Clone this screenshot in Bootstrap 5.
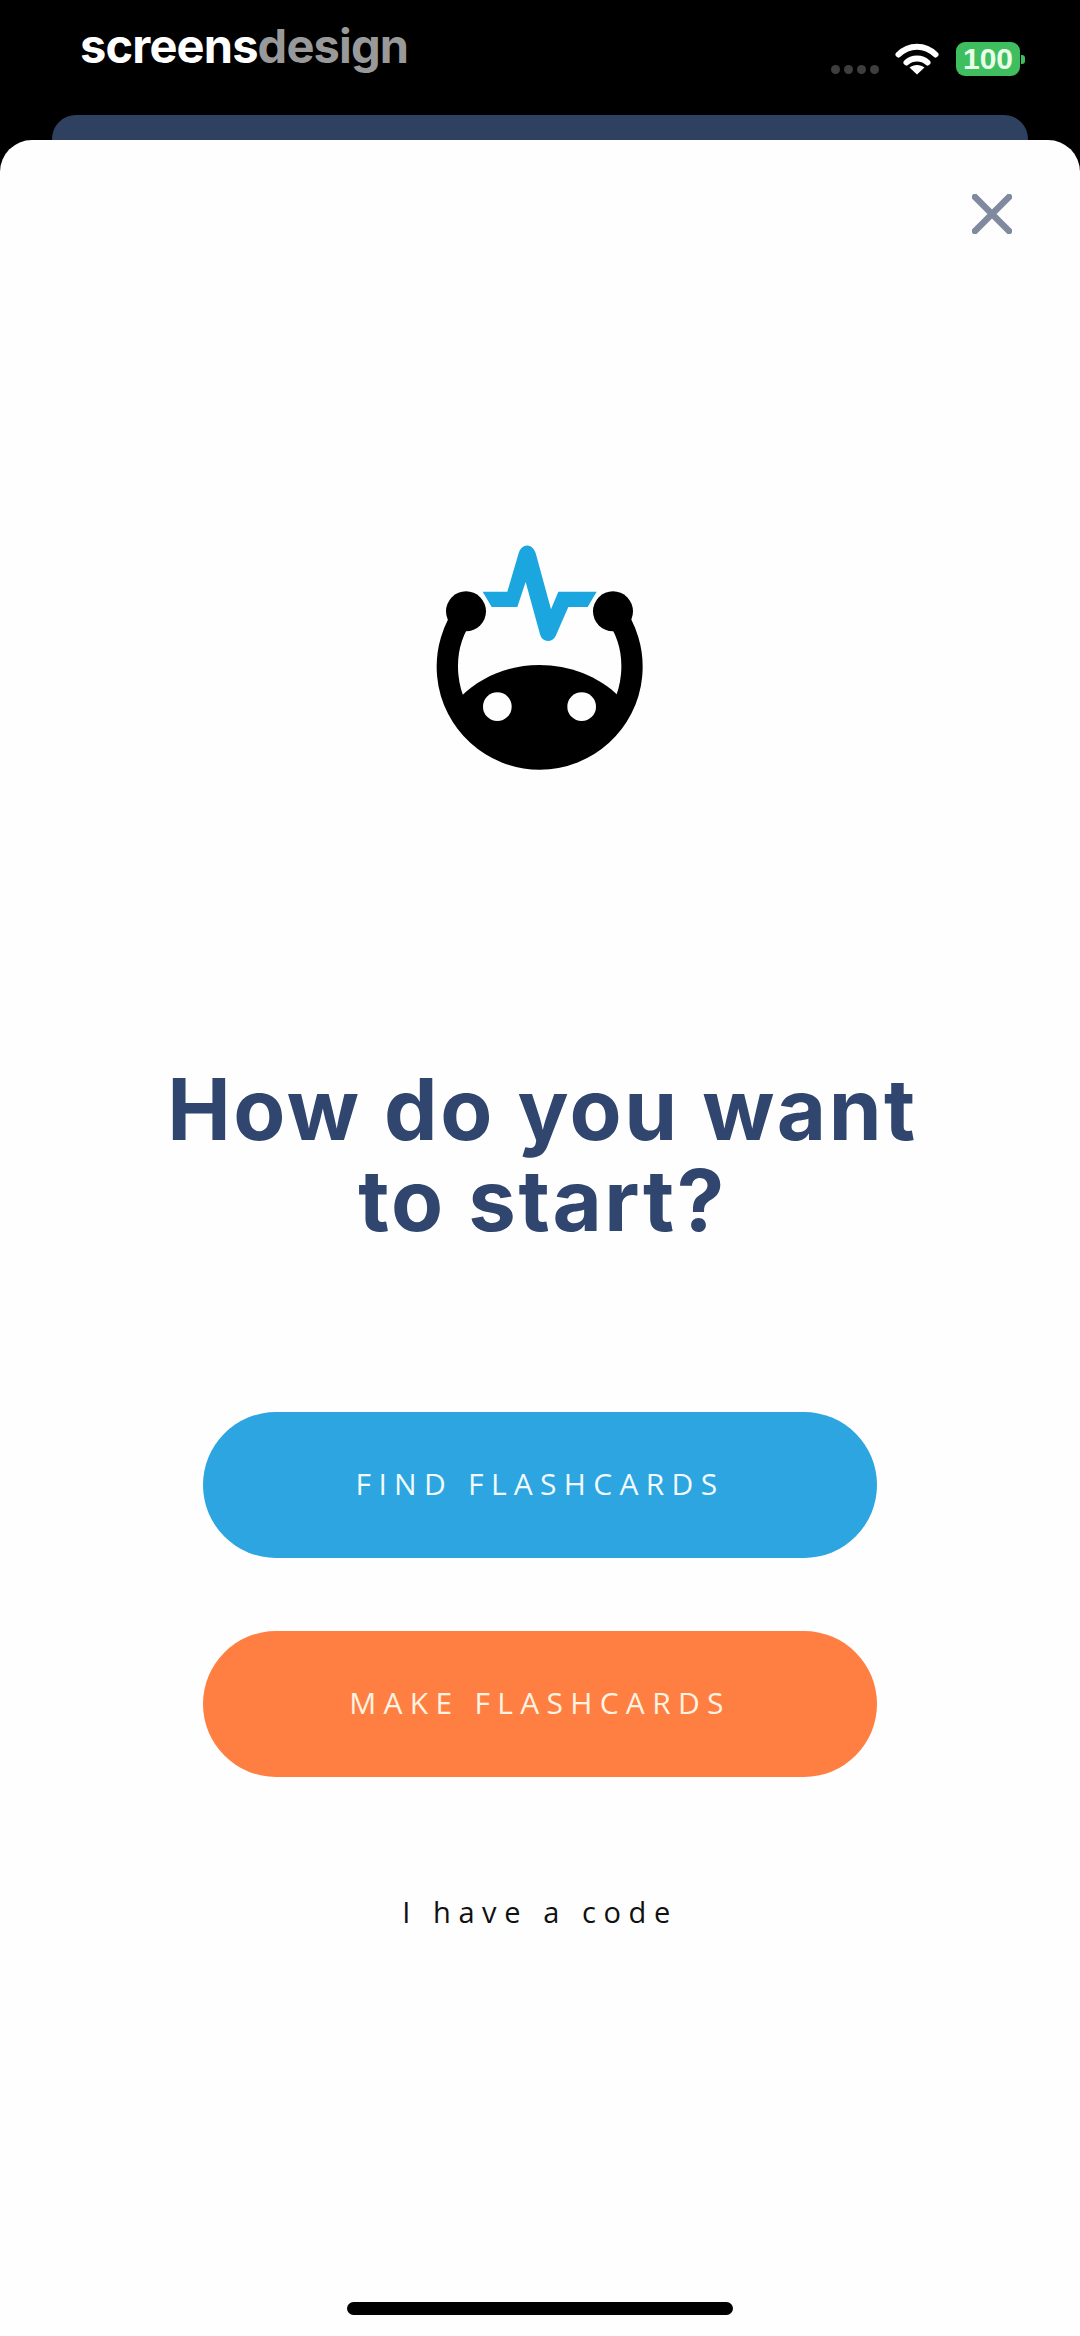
<!DOCTYPE html>
<html lang="en">
<head>
  <meta charset="UTF-8" />
  <meta name="viewport" content="width=device-width, initial-scale=1.0"/>
  <title>How do you want to start?</title>
  <link href="https://cdn.jsdelivr.net/npm/bootstrap@5.3.3/dist/css/bootstrap.min.css" rel="stylesheet" />
  <style>
    html, body {
      background-color: #000;
    }
    .screen {
      width: 1080px;
      height: 2336px;
      overflow: hidden;
    }
    .top-strip {
      height: 115px;
      padding: 22px 55px 0 80px;
    }
    .wordmark {
      font-family: Inter, "Liberation Sans", sans-serif;
      font-weight: 700;
      font-size: 47px;
      line-height: 1;
      letter-spacing: -0.85px;
      color: #fff;
    }
    .wordmark span {
      color: #999;
    }
    .status-group {
      margin-top: 20px;
    }
    .signal-dots {
      margin-top: 23px;
      margin-right: 16px;
      gap: 4px;
    }
    .signal-dots i {
      display: block;
      width: 9px;
      height: 9px;
      border-radius: 50%;
      background: #3e3e3e;
    }
    .battery {
      width: 64px;
      height: 34px;
      margin-left: 17px;
      border-radius: 9px;
      background: #3fbe5f;
      color: #e9ffe9;
      font-family: "Liberation Sans", Arial, sans-serif;
      font-weight: 700;
      font-size: 30px;
      line-height: 34px;
      text-align: center;
    }
    .battery-nub {
      width: 4px;
      height: 9px;
      margin-top: 13px;
      margin-left: 1px;
      border-radius: 0 3px 3px 0;
      background: #3fbe5f;
    }
    .sheet-peek {
      height: 25px;
      margin: 0 52px;
      border-radius: 24px 24px 0 0;
      background: #2e4160;
    }
    .sheet {
      height: 2196px;
      padding-top: 54px;
      border-radius: 32px 32px 0 0;
      background: #fefefe;
    }
    .close-row {
      padding-right: 68px;
    }
    .brand-mark {
      margin-top: 287px;
    }
    .headline {
      margin-top: 283px;
      margin-bottom: 0;
      padding-left: 5px;
      font-family: Inter, "Liberation Sans", sans-serif;
      font-weight: 700;
      font-size: 85px;
      line-height: 91px;
      letter-spacing: 2.5px;
      color: #30466f;
    }
    .start-btn {
      width: 674px;
      height: 146px;
      padding-bottom: 9px;
      border: 0;
      font-family: "Open Sans", sans-serif;
      font-weight: 500;
      font-size: 30px;
      letter-spacing: 7.3px;
      color: #f0faff;
    }
    .start-find {
      margin-top: 166px;
      background: #2ca5e0;
    }
    .start-make {
      margin-top: 73px;
      background: #ff7f43;
      color: #fff3e2;
    }
    .code-link {
      margin-top: 113px;
      font-family: "Open Sans", sans-serif;
      font-size: 29px;
      letter-spacing: 7.6px;
      color: #111;
    }
    .home-bar {
      width: 386px;
      height: 13px;
      margin-top: auto;
      margin-bottom: 21px;
      border-radius: 7px;
      background: #000;
    }
  </style>
</head>
<body>

  <div class="screen d-flex flex-column">

    <!-- Top strip -->
    <div class="top-strip d-flex justify-content-between align-items-start">
      <div class="wordmark">screens<span>design</span></div>
      <div class="status-group d-flex align-items-start">
        <div class="signal-dots d-flex"><i></i><i></i><i></i><i></i></div>
        <svg width="44" height="33" viewBox="0 0 44 33">
          <g fill="none" stroke="#fff" stroke-width="6" stroke-linecap="round">
            <path d="M3.5 12.5C14 2 30 2 40.5 12.5"/>
            <path d="M11.5 20.5C17 15 27 15 32.5 20.5"/>
          </g>
          <path d="M22 32.5L14.5 25.500C18.5 22 25.500 22 29.500 25.500Z" fill="#fff"/>
        </svg>
        <div class="battery">100</div>
        <div class="battery-nub"></div>
      </div>
    </div>
    <div class="sheet-peek"></div>

    <!-- Sheet -->
    <div class="sheet d-flex flex-column">
      <div class="close-row d-flex justify-content-end">
        <svg width="40" height="40" viewBox="0 0 40 40">
          <path d="M3 3L37 37M37 3L3 37" stroke="#7f8a9e" stroke-width="6.500" stroke-linecap="round"/>
        </svg>
      </div>

      <div class="d-flex flex-column align-items-center flex-grow-1">
        <svg class="brand-mark" width="260" height="260" viewBox="0 0 780 780">
          <path d="M168 270A277 277 0 1 0 610 270" fill="none" stroke="#000" stroke-width="64"/>
          <path d="M152 527C215 465 300 432 388 432C478 432 565 465 628 527L600 640L390 725L180 640Z" fill="#000"/>
          <circle cx="168" cy="271" r="60" fill="#000"/>
          <circle cx="609" cy="271" r="60" fill="#000"/>
          <circle cx="262" cy="557" r="43" fill="#fefefe"/>
          <circle cx="515" cy="557" r="43" fill="#fefefe"/>
          <path d="M218 212H292L325 100C333 66 369 64 378 100L423 265L445 212H560L533 258H475L437 345C427 366 397 366 390 340L347 183L322 258H245Z" fill="#1ba6e0"/>
        </svg>

        <h1 class="headline text-center">How do you want<br>to start?</h1>

        <button type="button" class="btn rounded-pill start-btn start-find">FIND FLASHCARDS</button>
        <button type="button" class="btn rounded-pill start-btn start-make">MAKE FLASHCARDS</button>

        <div class="code-link">I have a code</div>

        <div class="home-bar"></div>
      </div>
    </div>
  </div>

  <script src="https://cdn.jsdelivr.net/npm/bootstrap@5.3.3/dist/js/bootstrap.bundle.min.js"></script>
</body>
</html>
